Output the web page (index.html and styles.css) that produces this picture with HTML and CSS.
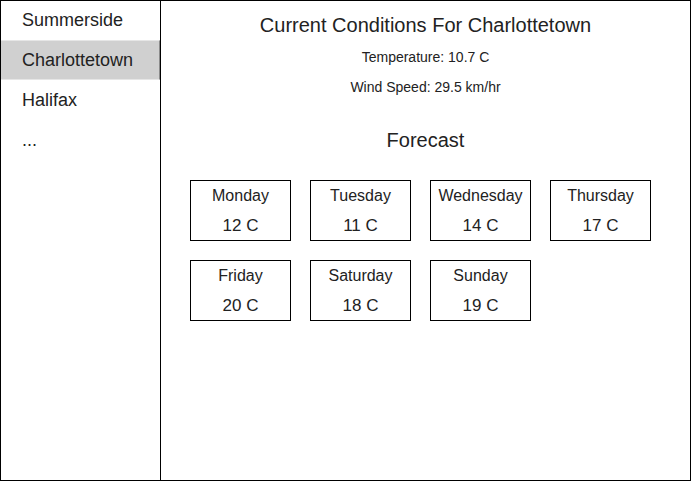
FILE: index.html
```html
<!DOCTYPE html>
<html>
<head>
<meta charset="utf-8">
<link rel="stylesheet" href="styles.css">
</head>
<body>
<div class="frame">
  <nav class="sidebar">
    <div class="item">Summerside</div>
    <div class="item active">Charlottetown</div>
    <div class="item">Halifax</div>
    <div class="item">...</div>
  </nav>
  <main class="main">
    <h1 class="title">Current Conditions For Charlottetown</h1>
    <p class="stat">Temperature: 10.7 C</p>
    <p class="stat">Wind Speed: 29.5 km/hr</p>
    <h2 class="subtitle">Forecast</h2>
    <div class="grid">
      <div class="card"><div class="day">Monday</div><div class="temp">12 C</div></div>
      <div class="card"><div class="day">Tuesday</div><div class="temp">11 C</div></div>
      <div class="card"><div class="day">Wednesday</div><div class="temp">14 C</div></div>
      <div class="card"><div class="day">Thursday</div><div class="temp">17 C</div></div>
      <div class="card"><div class="day">Friday</div><div class="temp">20 C</div></div>
      <div class="card"><div class="day">Saturday</div><div class="temp">18 C</div></div>
      <div class="card"><div class="day">Sunday</div><div class="temp">19 C</div></div>
    </div>
  </main>
</div>
</body>
</html>
```
FILE: styles.css
```css
html, body {
  margin: 0;
  padding: 0;
  background: #fff;
}
body {
  font-family: "Liberation Sans", Arial, sans-serif;
  color: #222;
}
.frame {
  box-sizing: border-box;
  width: 691px;
  height: 481px;
  border: 1px solid #000;
  display: flex;
}
.sidebar {
  width: 159px;
  border-right: 1px solid #000;
  flex-shrink: 0;
}
.item {
  box-sizing: border-box;
  height: 40px;
  line-height: 40px;
  padding-left: 21px;
  font-size: 18px;
}
.item:first-child {
  height: 39px;
  line-height: 38px;
}
.item.active {
  background: #d0d0d0;
  border-top: 1px solid #e6e6e6;
  border-bottom: 1px solid #e6e6e6;
  border-right: 1px solid #8a8a8a;
  line-height: 39px;
}
.main {
  flex: 1;
  padding: 12px 0 0 29px;
  text-align: center;
}
.title {
  margin: 0 29px 0 0;
  font-size: 20px;
  font-weight: normal;
  line-height: 24px;
}
.stat {
  margin: 5px 29px 0 0;
  font-size: 14px;
  line-height: 30px;
}
.stat + .stat {
  margin-top: 0;
}
.subtitle {
  margin: 26px 29px 0 0;
  font-size: 20px;
  font-weight: normal;
  line-height: 24px;
}
.grid {
  margin-top: 28px;
  display: grid;
  grid-template-columns: repeat(4, 101px);
  column-gap: 19px;
  row-gap: 19px;
}
.card {
  box-sizing: border-box;
  height: 61px;
  border: 1px solid #000;
  padding-top: 5px;
}
.day {
  font-size: 16px;
  line-height: 20px;
}
.temp {
  margin-top: 10px;
  font-size: 17px;
  line-height: 20px;
}
```
